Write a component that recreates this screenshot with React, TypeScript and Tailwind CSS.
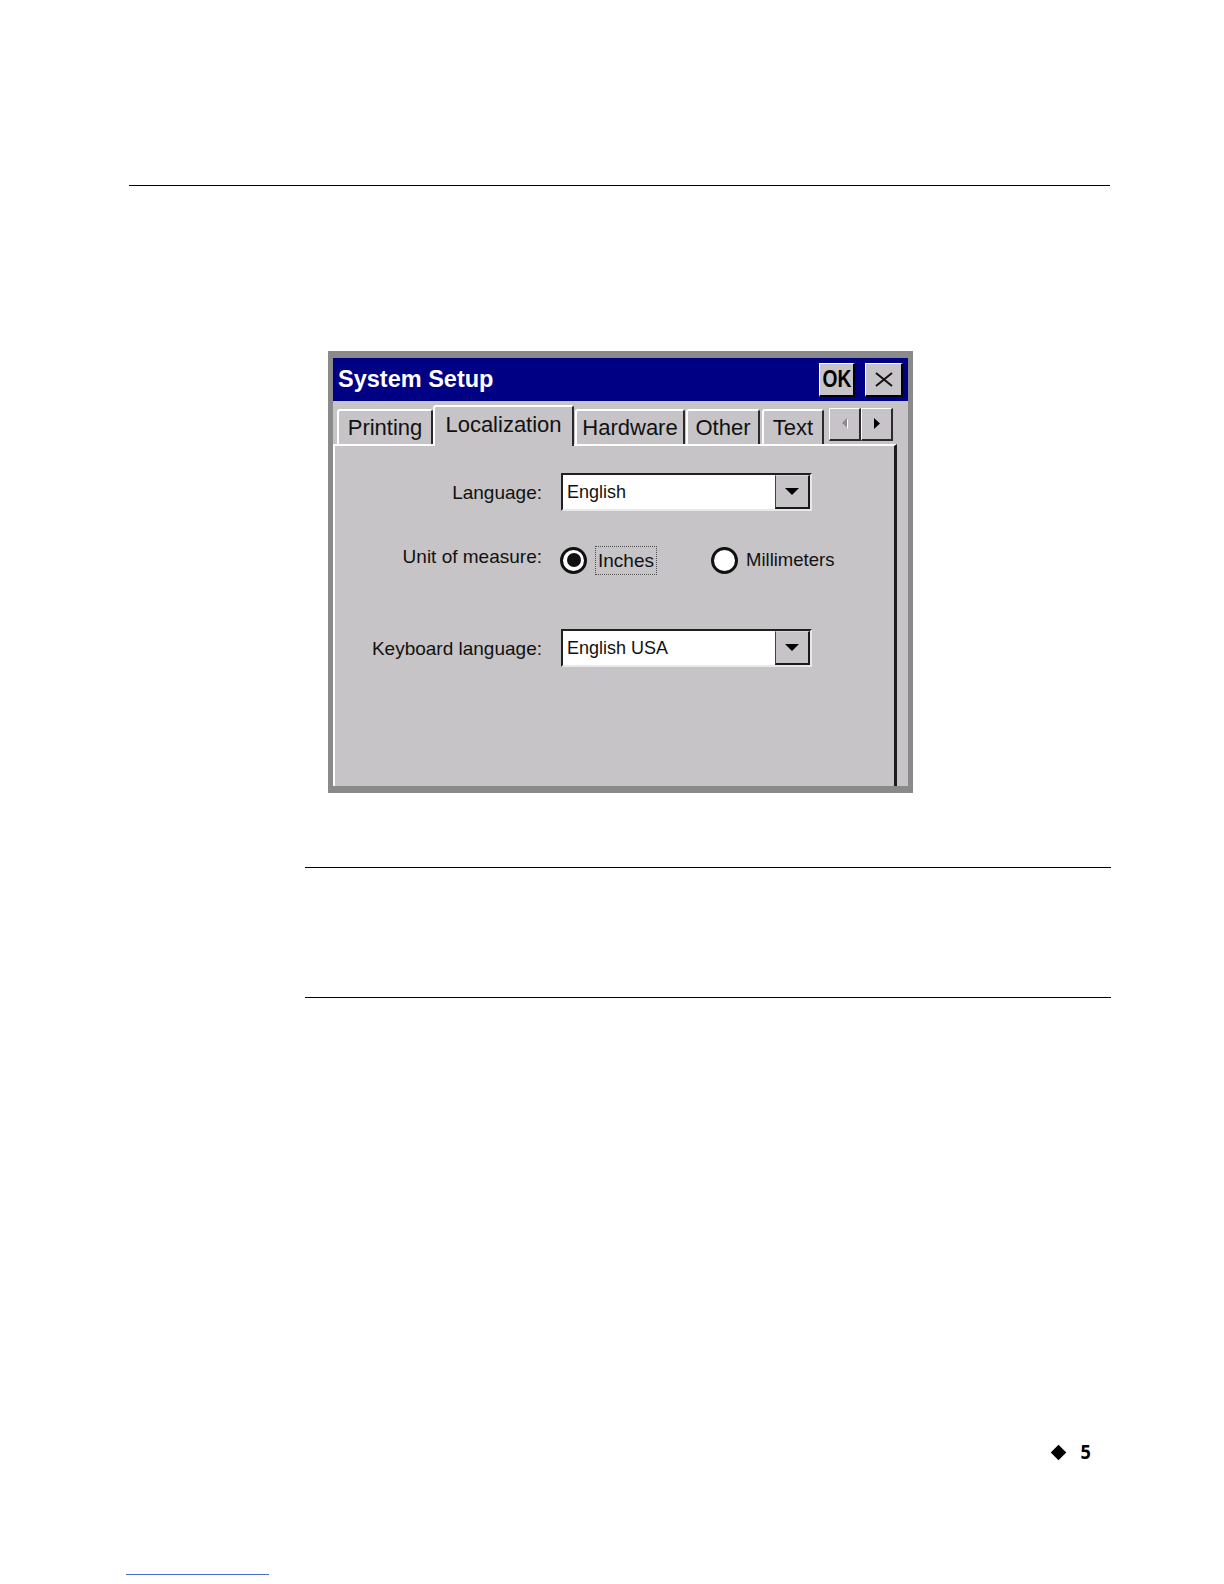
import type { ReactElement } from "react";

const TABS = [
  { label: "Printing", cls: "w-[96px]" },
  { label: "Localization", cls: "w-[141px]", active: true },
  { label: "Hardware", cls: "ml-[1px] w-[110px]" },
  { label: "Other", cls: "ml-[1px] w-[74px]" },
  { label: "Text", cls: "ml-[2px] w-[62px]" },
];

function Tab({
  label,
  cls,
  active,
}: {
  label: string;
  cls: string;
  active?: boolean;
}): ReactElement {
  return (
    <div
      className={`flex items-center justify-center rounded-t-[3px] border-l-2 border-r-2 border-t-2 border-l-white border-r-[#2a2a2a] border-t-white bg-[#c6c4c6] text-[22px] leading-none text-[#111] ${cls} ${
        active ? "relative z-10 -mb-[2px] h-[41px] pb-[4px]" : "h-[35px]"
      }`}
    >
      {label}
    </div>
  );
}

function ArrowButton({ dir }: { dir: "left" | "right" }): ReactElement {
  return (
    <div className="flex h-[33px] w-[32px] items-center justify-center border-b-2 border-l border-r-2 border-t border-b-[#2a2a2a] border-l-white border-r-[#2a2a2a] border-t-white bg-[#c6c4c6]">
      {dir === "left" ? (
        <svg width="8" height="12" viewBox="0 0 8 12">
          <polygon points="7,1 7,11 2,6" fill="#ffffff" />
          <polygon points="6,0 6,10 1,5" fill="#8c8a8c" />
        </svg>
      ) : (
        <svg width="8" height="12" viewBox="0 0 8 12">
          <polygon points="1,0 1,11 7,5.5" fill="#000" />
        </svg>
      )}
    </div>
  );
}

function Combo({ value }: { value: string }): ReactElement {
  return (
    <div className="flex h-[38px] w-[251px] items-stretch border-2 border-b-[#e8e8e8] border-l-[#202020] border-r-[#e8e8e8] border-t-[#202020] bg-white">
      <span className="flex flex-1 items-center pl-[4px] text-[18px] leading-none text-[#111]">
        {value}
      </span>
      <div className="flex w-[35px] items-center justify-center border-b-2 border-l border-r-2 border-t border-b-[#1a1a1a] border-l-[#404040] border-r-[#1a1a1a] border-t-[#d8d8d8] bg-[#c6c4c6]">
        <svg width="14" height="8" viewBox="0 0 14 8">
          <polygon points="0,0 14,0 7,7" fill="#000" />
        </svg>
      </div>
    </div>
  );
}

function Radio({ checked }: { checked?: boolean }): ReactElement {
  return (
    <div className="flex h-[27px] w-[27px] shrink-0 items-center justify-center rounded-full border-[3px] border-[#111] bg-white">
      {checked && <div className="h-[14px] w-[14px] rounded-full bg-[#111]" />}
    </div>
  );
}

function SetupWindow(): ReactElement {
  return (
    <div className="ml-[328px] mt-[165px] flex h-[442px] w-[585px] flex-col bg-[#8a8a8a] pb-[7px] pl-[5px] pr-[5px] pt-[7px] font-['Liberation_Sans',Arial,sans-serif]">
      <div className="flex h-[43px] items-center bg-[#000084] pl-[5px] pr-[5px]">
        <span className="text-[23.5px] font-bold leading-none text-white">
          System Setup
        </span>
        <div className="ml-auto flex gap-[10px]">
          <div className="flex h-[34px] w-[36px] items-center justify-center overflow-hidden border-b-2 border-l border-r-2 border-t border-b-black border-l-white border-r-black border-t-white bg-[#c6c4c6] text-[24px] font-bold leading-none text-black">
            <span className="inline-block scale-x-[0.8]">OK</span>
          </div>
          <div className="flex h-[34px] w-[38px] items-center justify-center border-b-2 border-l border-r-2 border-t border-b-black border-l-white border-r-black border-t-white bg-[#c6c4c6]">
            <svg width="18" height="15" viewBox="0 0 18 15">
              <path
                d="M1 1 L17 14 M17 1 L1 14"
                stroke="#111"
                strokeWidth="2"
                fill="none"
              />
            </svg>
          </div>
        </div>
      </div>
      <div className="flex flex-1 flex-col bg-[#c6c4c6]">
        <div className="flex h-[43px] items-end pl-[4px]">
          {TABS.map((tab) => (
            <Tab key={tab.label} {...tab} />
          ))}
          <div className="mb-[3px] ml-[5px] flex">
            <ArrowButton dir="left" />
            <ArrowButton dir="right" />
          </div>
        </div>
        <div className="mr-[11px] flex flex-1 flex-col border-l-2 border-r-[3px] border-t-2 border-l-white border-r-[#1c1c1c] border-t-white text-[#111]">
          <div className="mt-[27px] grid grid-cols-[207px_1fr] items-center gap-x-[19px]">
            <span className="text-right text-[19px] leading-none">
              Language:
            </span>
            <Combo value="English" />
          </div>
          <div className="mt-[30px] grid h-[38px] grid-cols-[207px_1fr] items-center gap-x-[18px]">
            <span className="pb-[8px] text-right text-[19px] leading-none">
              Unit of measure:
            </span>
            <div className="flex items-center">
              <Radio checked />
              <span className="ml-[8px] flex h-[29px] w-[62px] items-center justify-center border border-dotted border-[#505050] text-[19px] leading-none">
                Inches
              </span>
              <div className="ml-[54px]">
                <Radio />
              </div>
              <span className="ml-[8px] text-[18.5px] leading-none">
                Millimeters
              </span>
            </div>
          </div>
          <div className="mt-[50px] grid grid-cols-[207px_1fr] items-center gap-x-[19px]">
            <span className="text-right text-[19px] leading-none">
              Keyboard language:
            </span>
            <Combo value="English USA" />
          </div>
        </div>
      </div>
    </div>
  );
}

export default function App(): ReactElement {
  return (
    <div className="flex h-[1584px] w-[1224px] flex-col bg-white pt-[185px]">
      <div className="ml-[129px] h-px w-[981px] bg-black" />
      <SetupWindow />
      <div className="ml-[305px] mt-[74px] h-px w-[806px] bg-black" />
      <div className="ml-[305px] mt-[129px] h-px w-[806px] bg-black" />
      <div className="ml-[1051px] mt-[444px] flex items-center">
        <div className="ml-[2px] h-[11px] w-[11px] rotate-45 bg-black" />
        <span className="ml-[16px] inline-block scale-x-[0.9] text-[20px] font-bold leading-none text-black">
          5
        </span>
      </div>
      <div className="ml-[126px] mt-[112px] h-px w-[143px] bg-[#4a6ad0]" />
    </div>
  );
}
